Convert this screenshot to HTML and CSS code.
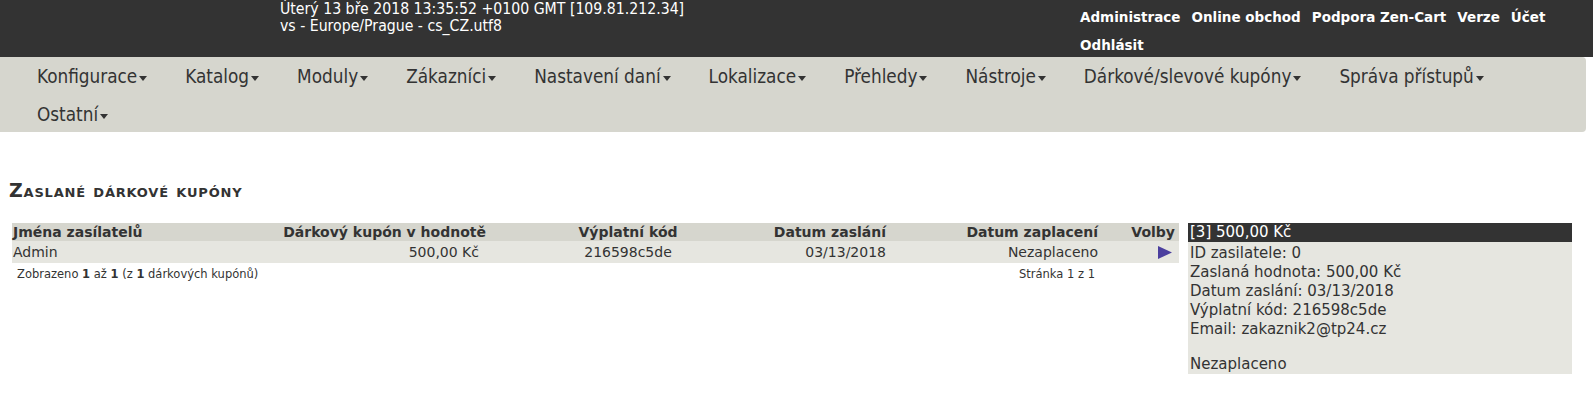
FILE: index.html
```html
<!DOCTYPE html>
<html lang="cs">
<head>
<meta charset="utf-8">
<title>Zaslané dárkové kupóny</title>
<link rel="stylesheet" href="styles.css">
</head>
<body>
<header class="topbar">
  <div class="topinfo">
    <div>Úterý 13 bře 2018 13:35:52 +0100 GMT [109.81.212.34]</div>
    <div>vs - Europe/Prague - cs_CZ.utf8</div>
  </div>
  <nav class="toplinks">
    <a href="#">Administrace</a>
    <a href="#">Online obchod</a>
    <a href="#">Podpora Zen-Cart</a>
    <a href="#">Verze</a>
    <a href="#">Účet</a>
    <a href="#">Odhlásit</a>
  </nav>
</header>
<nav class="menu">
  <a href="#">Konfigurace<span class="caret"></span></a>
  <a href="#">Katalog<span class="caret"></span></a>
  <a href="#">Moduly<span class="caret"></span></a>
  <a href="#">Zákazníci<span class="caret"></span></a>
  <a href="#">Nastavení daní<span class="caret"></span></a>
  <a href="#">Lokalizace<span class="caret"></span></a>
  <a href="#">Přehledy<span class="caret"></span></a>
  <a href="#">Nástroje<span class="caret"></span></a>
  <a href="#">Dárkové/slevové kupóny<span class="caret"></span></a>
  <a href="#">Správa přístupů<span class="caret"></span></a>
  <a href="#">Ostatní<span class="caret"></span></a>
</nav>
<main class="content">
  <h1 class="title">Zaslané dárkové kupóny</h1>
  <div class="layout">
    <div class="listing">
      <div class="grid head">
        <div class="c1">Jména zasílatelů</div>
        <div class="c2">Dárkový kupón v hodnotě</div>
        <div class="c3">Výplatní kód</div>
        <div class="c4">Datum zaslání</div>
        <div class="c5">Datum zaplacení</div>
        <div class="c6">Volby</div>
      </div>
      <div class="grid row">
        <div class="c1">Admin</div>
        <div class="c2 v2">500,00 Kč</div>
        <div class="c3">216598c5de</div>
        <div class="c4">03/13/2018</div>
        <div class="c5">Nezaplaceno</div>
        <div class="c6 v6"><svg class="arrow" width="14" height="13" viewBox="0 0 14 13"><polygon points="0,0 14,6.5 0,13" fill="#4b3f9e"/></svg></div>
      </div>
      <div class="paging">
        <div class="count">Zobrazeno <b>1</b> až <b>1</b> (z <b>1</b> dárkových kupónů)</div>
        <div class="pages">Stránka 1 z 1</div>
      </div>
    </div>
    <aside class="info">
      <div class="info-head">[3] 500,00 Kč</div>
      <div class="info-body">
        <div class="line">ID zasilatele: 0</div>
        <div class="line">Zaslaná hodnota: 500,00 Kč</div>
        <div class="line">Datum zaslání: 03/13/2018</div>
        <div class="line">Výplatní kód: 216598c5de</div>
        <div class="line">Email: zakaznik2@tp24.cz</div>
        <div class="blank"></div>
        <div class="line">Nezaplaceno</div>
      </div>
    </aside>
  </div>
</main>
</body>
</html>
```
FILE: styles.css
```css
html, body {
  margin: 0;
  padding: 0;
  background: #ffffff;
}
body {
  font-family: "DejaVu Sans", Verdana, sans-serif;
  color: #333333;
}
a { text-decoration: none; }

.topbar {
  background: #333333;
  height: 57px;
  display: flex;
  justify-content: space-between;
  box-sizing: border-box;
}
.topinfo {
  margin-left: 280px;
  color: #ffffff;
  font-family: "DejaVu Sans Condensed", "DejaVu Sans", sans-serif;
  font-size: 15.7px;
  line-height: 16.5px;
  padding-top: 1px;
}
.toplinks {
  width: 500px;
  display: flex;
  flex-wrap: wrap;
  align-content: flex-start;
  column-gap: 11px;
  padding-top: 3px;
  margin-right: 13px;
}
.toplinks a {
  color: #ffffff;
  font-family: "DejaVu Sans", sans-serif;
  font-weight: bold;
  font-size: 13.5px;
  line-height: 28px;
}

.menu {
  background: #d6d6ce;
  width: 1586px;
  box-sizing: border-box;
  height: 75px;
  border-radius: 0 4px 4px 0;
  display: flex;
  flex-wrap: wrap;
  align-content: flex-start;
  padding: 1px 0 0 18px;
}
.menu a {
  color: #333333;
  font-family: "DejaVu Sans Condensed", "DejaVu Sans", sans-serif;
  font-size: 18.8px;
  line-height: 38px;
  padding: 0 19px;
  display: flex;
  align-items: center;
}
.caret {
  display: inline-block;
  width: 0;
  height: 0;
  border-left: 4px solid transparent;
  border-right: 4px solid transparent;
  border-top: 5px solid #333333;
  margin-left: 2px;
  margin-top: 3px;
}

.content {
  padding: 0 9px;
}
.title {
  font-variant: small-caps;
  font-size: 19px;
  font-weight: bold;
  margin: 44px 0 0 0;
  line-height: 28px;
  letter-spacing: 0.8px;
  color: #333333;
}

.layout {
  display: flex;
  align-items: flex-start;
  gap: 9px;
  margin-top: 19px;
  padding-left: 3px;
}
.listing {
  width: 1167px;
}
.grid {
  display: grid;
  grid-template-columns: 188px 288px 280px 120px 212px 79px;
  font-size: 14px;
}
.head {
  background: #d6d6ce;
  font-weight: bold;
  height: 18px;
  line-height: 18px;
}
.row {
  background: #e6e6e0;
  height: 22px;
  line-height: 22px;
}
.c1 { text-align: left; padding-left: 1px; }
.c2 { text-align: right; padding-right: 2px; }
.c2.v2 { padding-right: 9px; }
.c3 { text-align: center; }
.c4 { text-align: right; padding-right: 2px; }
.c5 { text-align: right; padding-right: 2px; }
.c6 { text-align: right; padding-right: 4px; }
.c6.v6 { padding-right: 7px; display: flex; justify-content: flex-end; align-items: center; }
.arrow { display: block; }

.paging {
  display: flex;
  justify-content: space-between;
  width: 1083px;
  font-size: 11.5px;
  line-height: 22px;
  padding-left: 5px;
  box-sizing: border-box;
}

.info {
  width: 384px;
  font-size: 15px;
}
.info-head {
  background: #333333;
  color: #ffffff;
  height: 19px;
  line-height: 19px;
  padding-left: 2px;
}
.info-body {
  background: #e6e6e0;
  padding: 2px 2px 0;
}
.line {
  height: 19px;
  line-height: 19px;
  white-space: nowrap;
}
.blank { height: 16px; }
```
